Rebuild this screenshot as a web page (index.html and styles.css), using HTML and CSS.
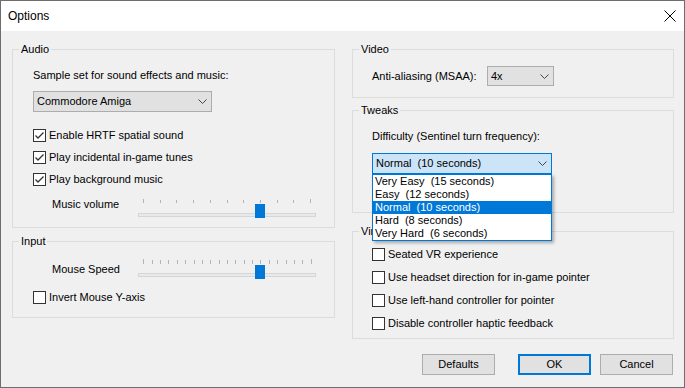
FILE: index.html
```html
<!DOCTYPE html>
<html lang="en">
<head>
    <meta charset="UTF-8">
    <meta name="viewport" content="width=device-width, initial-scale=1.0">
    <title>Options</title>
    <link rel="stylesheet" href="styles.css">
</head>
<body>
    <div class="window">
        <div class="titlebar">
            <span class="title">Options</span>
            <svg class="close" width="12" height="12" viewBox="0 0 12 12"><path d="M0.5 0.5L11.5 11.5M11.5 0.5L0.5 11.5" stroke="#000" stroke-width="1" fill="none"/></svg>
        </div>
        <div class="columns">
            <div class="col col-left">
                <div class="group group-audio">
                    <div class="group-title">Audio</div>
                    <div class="group-body">
                        <div class="text">Sample set for sound effects and music:</div>
                        <div class="combo combo-sample">
                            <span>Commodore Amiga</span>
                            <svg class="chevron" width="9" height="5" viewBox="0 0 9 5"><polyline points="0.5,0.5 4.5,4.5 8.5,0.5" fill="none" stroke="#444"/></svg>
                        </div>
                        <div class="checks">
                            <div class="check"><span class="box"><svg width="11" height="11" viewBox="0 0 11 11"><polyline points="1.5,5.5 4,8 9.5,2.5" fill="none" stroke="#333" stroke-width="1.3"/></svg></span>Enable HRTF spatial sound</div>
                            <div class="check"><span class="box"><svg width="11" height="11" viewBox="0 0 11 11"><polyline points="1.5,5.5 4,8 9.5,2.5" fill="none" stroke="#333" stroke-width="1.3"/></svg></span>Play incidental in-game tunes</div>
                            <div class="check"><span class="box"><svg width="11" height="11" viewBox="0 0 11 11"><polyline points="1.5,5.5 4,8 9.5,2.5" fill="none" stroke="#333" stroke-width="1.3"/></svg></span>Play background music</div>
                        </div>
                        <div class="slider-row slider-music">
                            <span class="slider-label">Music volume</span>
                            <svg class="slider" width="179" height="21" viewBox="0 0 179 21">
                                <path d="M5.5 0v4M22.5 1v3M38.5 1v3M55.5 1v3M72.5 1v3M89.5 1v3M105.5 1v3M122.5 1v3M139.5 1v3M155.5 1v3M172.5 0v4" stroke="#b4b4b4"/>
                                <rect x="0.5" y="14.5" width="177" height="3" fill="#e7eaea" stroke="#d6d6d6"/>
                                <rect x="117" y="5" width="10" height="14" fill="#0078d7"/>
                            </svg>
                        </div>
                    </div>
                </div>
                <div class="group group-input">
                    <div class="group-title">Input</div>
                    <div class="group-body">
                        <div class="slider-row slider-mouse">
                            <span class="slider-label">Mouse Speed</span>
                            <svg class="slider" width="179" height="21" viewBox="0 0 179 21">
                                <path d="M5.5 0v5M14.5 1v4M22.5 1v4M30.5 1v4M39.5 1v4M47.5 1v4M56.5 1v4M64.5 1v4M72.5 1v4M81.5 1v4M89.5 1v4M97.5 1v4M106.5 1v4M114.5 1v4M122.5 1v4M131.5 1v4M139.5 1v4M148.5 1v4M156.5 1v4M164.5 1v4M173.5 0v5" stroke="#b4b4b4"/>
                                <rect x="0.5" y="14.5" width="177" height="3" fill="#e7eaea" stroke="#d6d6d6"/>
                                <rect x="117" y="6" width="10" height="14" fill="#0078d7"/>
                            </svg>
                        </div>
                        <div class="check"><span class="box"></span>Invert Mouse Y-axis</div>
                    </div>
                </div>
            </div>
            <div class="col col-right">
                <div class="group group-video">
                    <div class="group-title">Video</div>
                    <div class="group-body">
                        <span class="field-label">Anti-aliasing (MSAA):</span>
                        <div class="combo combo-msaa">
                            <span>4x</span>
                            <svg class="chevron" width="9" height="5" viewBox="0 0 9 5"><polyline points="0.5,0.5 4.5,4.5 8.5,0.5" fill="none" stroke="#444"/></svg>
                        </div>
                    </div>
                </div>
                <div class="group group-tweaks">
                    <div class="group-title">Tweaks</div>
                    <div class="group-body">
                        <div class="text">Difficulty (Sentinel turn frequency):</div>
                        <div class="dropdown">
                            <div class="combo combo-focus">
                                <span class="pre">Normal  (10 seconds)</span>
                                <svg class="chevron" width="9" height="5" viewBox="0 0 9 5"><polyline points="0.5,0.5 4.5,4.5 8.5,0.5" fill="none" stroke="#444"/></svg>
                            </div>
                            <div class="dropdown-list">
                                <div class="option">Very Easy  (15 seconds)</div>
                                <div class="option">Easy  (12 seconds)</div>
                                <div class="option option-selected">Normal  (10 seconds)</div>
                                <div class="option">Hard  (8 seconds)</div>
                                <div class="option">Very Hard  (6 seconds)</div>
                            </div>
                        </div>
                    </div>
                </div>
                <div class="group group-vr">
                    <div class="group-title">Virtual Reality</div>
                    <div class="group-body">
                        <div class="checks">
                            <div class="check"><span class="box"></span>Seated VR experience</div>
                            <div class="check"><span class="box"></span>Use headset direction for in-game pointer</div>
                            <div class="check"><span class="box"></span>Use left-hand controller for pointer</div>
                            <div class="check"><span class="box"></span>Disable controller haptic feedback</div>
                        </div>
                    </div>
                </div>
            </div>
        </div>
        <div class="buttons">
            <button class="button">Defaults</button>
            <button class="button button-default">OK</button>
            <button class="button button-cancel">Cancel</button>
        </div>
    </div>
</body>
</html>
```

FILE: styles.css
```css
* {
    box-sizing: border-box;
}
body {
    margin: 0;
    font-family: "Liberation Sans", Arial, sans-serif;
    font-size: 11px;
    line-height: 15px;
    color: #000;
    background-color: #f0f0f0;
}
.window {
    width: 685px;
    height: 388px;
    border: 1px solid #6d6d6d;
    background-color: #f0f0f0;
}
.titlebar {
    height: 30px;
    background-color: #fff;
    display: flex;
    align-items: center;
    justify-content: space-between;
    padding: 0 8px 0 7px;
}
.title {
    font-size: 12px;
}
.close {
    display: block;
}
.columns {
    display: grid;
    grid-template-columns: 323px 322px;
    column-gap: 17px;
    align-items: start;
    padding: 18px 0 0 11px;
}
.col {
    display: flex;
    flex-direction: column;
}
.group {
    border: 1px solid #dcdcdc;
}
.group-title {
    width: fit-content;
    margin: -8px 0 0 6px;
    padding: 0 2px;
    background-color: #f0f0f0;
    white-space: nowrap;
}
.group-body {
    padding-left: 20px;
}
.col-right .group-body {
    padding-left: 19px;
}
.group-audio {
    height: 179px;
}
.group-audio .group-body {
    padding-top: 11px;
}
.group-input {
    height: 77px;
    margin-top: 13px;
}
.group-input .group-body {
    padding-top: 10px;
}
.group-video {
    height: 49px;
}
.group-video .group-body {
    padding-top: 9px;
    display: flex;
    align-items: center;
}
.group-tweaks {
    height: 103px;
    margin-top: 12px;
}
.group-tweaks .group-body {
    padding-top: 11px;
}
.group-vr {
    height: 108px;
    margin-top: 18px;
}
.group-vr .group-body {
    padding-top: 8px;
}
.field-label {
    width: 115px;
}
.combo {
    display: flex;
    align-items: center;
    justify-content: space-between;
    height: 21px;
    padding: 0 4px 0 3px;
    background-color: #e1e1e1;
    border: 1px solid #adadad;
}
.chevron {
    display: block;
}
.combo-sample {
    width: 179px;
    margin-top: 8px;
}
.combo-msaa {
    width: 67px;
    height: 20px;
}
.combo-focus {
    width: 180px;
    background-color: #cce4f7;
    border-color: #0078d7;
}
.pre {
    white-space: pre;
}
.dropdown {
    position: relative;
    width: 180px;
    margin-top: 9px;
}
.dropdown-list {
    position: absolute;
    top: 21px;
    left: 0;
    width: 180px;
    background-color: #fff;
    border: 1px solid #0078d7;
    box-shadow: 2px 2px 3px rgba(0, 0, 0, 0.3);
    z-index: 2;
}
.option {
    height: 13px;
    line-height: 13px;
    padding-left: 2px;
    white-space: pre;
}
.option-selected {
    background-color: #0078d7;
    color: #fff;
}
.checks {
    display: flex;
    flex-direction: column;
    gap: 7px;
    margin-top: 16px;
}
.group-vr .checks {
    gap: 8px;
    margin-top: 0;
}
.check {
    display: flex;
    align-items: center;
    height: 15px;
    white-space: nowrap;
}
.group-input .check {
    margin-top: 10px;
}
.box {
    display: flex;
    width: 13px;
    height: 13px;
    margin-right: 3px;
    border: 1px solid #333;
    background-color: #fff;
}
.slider-row {
    display: flex;
    align-items: flex-start;
}
.slider-label {
    width: 86px;
    margin-left: 19px;
}
.slider {
    display: block;
}
.slider-music {
    margin-top: 10px;
}
.slider-music .slider {
    margin-top: 2px;
}
.slider-mouse .slider-label {
    margin-top: 3px;
}
.buttons {
    display: flex;
    justify-content: flex-end;
    margin-top: 15px;
    padding-right: 11px;
}
.button {
    width: 73px;
    height: 21px;
    padding: 0;
    font: inherit;
    color: #000;
    background-color: #e1e1e1;
    border: 1px solid #adadad;
}
.button-default {
    margin-left: 23px;
    border: 2px solid #0078d7;
}
.button-cancel {
    margin-left: 9px;
}
```
